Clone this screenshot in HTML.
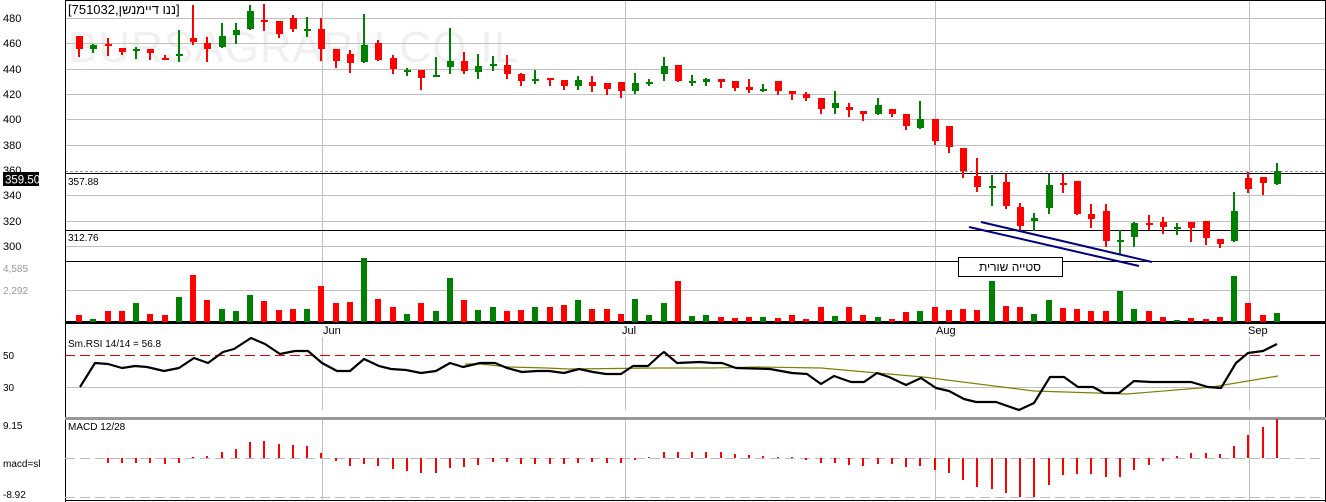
<!DOCTYPE html>
<html><head><meta charset="utf-8"><style>
html,body{margin:0;padding:0;background:#fff;width:1326px;height:502px;overflow:hidden}
svg{display:block}
text{font-family:"Liberation Sans",Arial,sans-serif}
</style></head><body>
<svg id="s" width="1326" height="502" xmlns="http://www.w3.org/2000/svg">
<rect width="1326" height="502" fill="#fff"/>
<text x="68" y="62" font-size="44" fill="#f0f0f0" letter-spacing="1">BURSAGRAPH.CO.IL</text>
<g stroke="#c0c0c0" stroke-width="1" shape-rendering="crispEdges">
<line x1="65" y1="18.5" x2="1325" y2="18.5"/><line x1="65" y1="43.5" x2="1325" y2="43.5"/>
<line x1="65" y1="69.5" x2="1325" y2="69.5"/><line x1="65" y1="94.5" x2="1325" y2="94.5"/>
<line x1="65" y1="119.5" x2="1325" y2="119.5"/><line x1="65" y1="145.5" x2="1325" y2="145.5"/>
<line x1="65" y1="195.5" x2="1325" y2="195.5"/><line x1="65" y1="221.5" x2="1325" y2="221.5"/>
<line x1="65" y1="246.5" x2="1325" y2="246.5"/><line x1="65" y1="290.5" x2="1325" y2="290.5"/>
<line x1="322.5" y1="0" x2="322.5" y2="322"/><line x1="625.5" y1="0" x2="625.5" y2="322"/>
<line x1="935.5" y1="0" x2="935.5" y2="322"/><line x1="1249.5" y1="0" x2="1249.5" y2="322"/>
<line x1="322.5" y1="337" x2="322.5" y2="410"/><line x1="625.5" y1="337" x2="625.5" y2="410"/>
<line x1="935.5" y1="337" x2="935.5" y2="410"/><line x1="1249.5" y1="337" x2="1249.5" y2="410"/>
<line x1="322.5" y1="420" x2="322.5" y2="500"/><line x1="625.5" y1="420" x2="625.5" y2="500"/>
<line x1="935.5" y1="420" x2="935.5" y2="500"/><line x1="1249.5" y1="420" x2="1249.5" y2="500"/>
<line x1="65" y1="387.5" x2="1325" y2="387.5"/>
</g>
<line x1="65" y1="171.5" x2="1325" y2="171.5" stroke="#999" stroke-dasharray="3,2" shape-rendering="crispEdges"/>
<g stroke="#000" shape-rendering="crispEdges">
<line x1="65" y1="173.5" x2="1325" y2="173.5"/><line x1="65" y1="230.5" x2="1325" y2="230.5"/>
<line x1="65" y1="261.5" x2="1325" y2="261.5"/>
<line x1="65" y1="0.5" x2="1325" y2="0.5"/>
<line x1="65.5" y1="0" x2="65.5" y2="502"/><line x1="1325.5" y1="0" x2="1325.5" y2="502"/>
<line x1="65" y1="500.5" x2="1326" y2="500.5"/>
</g>
<rect x="65" y="321" width="1261" height="3" fill="#000"/>
<rect x="65" y="417" width="1261" height="3" fill="#999"/>
<line x1="65" y1="355.5" x2="1325" y2="355.5" stroke="#e00000" stroke-dasharray="10,5" shape-rendering="crispEdges"/>
<g stroke="#bbb" stroke-dasharray="10,5" shape-rendering="crispEdges">
<line x1="65" y1="458.5" x2="1325" y2="458.5"/><line x1="65" y1="497.5" x2="1325" y2="497.5"/>
</g>
<g id="c" shape-rendering="crispEdges"></g>
<polyline fill="none" stroke="#808000" stroke-width="1.2" points="465,364 480,364 509,367 547,368 568,369 660,368 713,368 758,367 821,368 923,377 1034,391 1127,394 1212,387 1278,376"/>
<polyline fill="none" stroke="#000" stroke-width="2.2" stroke-linejoin="round" points="80,387 95,363 108,364 122,368 135,366 147,367 164,371 179,368 194,358 208,363 223,352 234,349 251,338 265,344 280,354 295,351 308,351 322,363 337,371 350,371 364,359 379,366 391,369 406,370 421,373 436,371 450,363 463,367 480,363 495,363 507,368 522,372 537,371 549,371 564,373 579,369 593,372 606,374 621,374 633,366 648,366 660,355 664,352 677,363 700,362 713,363 722,363 736,368 770,369 792,373 807,374 821,384 834,376 851,382 864,382 877,373 889,377 906,385 921,378 936,388 949,391 964,399 976,402 996,402 1019,410 1034,403 1050,377 1064,377 1078,387 1093,387 1104,393 1119,393 1134,381 1151,382 1191,382 1208,387 1221,388 1236,363 1248,353 1263,351 1277,344"/>
<g stroke="#000080" stroke-width="2">
<line x1="969" y1="227" x2="1139" y2="266"/><line x1="981" y1="222" x2="1152" y2="262"/>
</g>
<rect x="958.5" y="257.5" width="104" height="19" fill="#fff" stroke="#000" shape-rendering="crispEdges"/>
<text x="1010" y="271" font-size="12" text-anchor="middle" font-family="'Liberation Sans','Noto Sans CJK JP',sans-serif">סטייה שורית</text>
<text x="68" y="14" font-size="13" font-family="'Liberation Sans','Noto Sans CJK JP',sans-serif">[751032,ננו דיימנשן]</text>
<g font-size="11" fill="#000">
<text x="3" y="22">480</text><text x="3" y="47">460</text><text x="3" y="73">440</text>
<text x="3" y="98">420</text><text x="3" y="123">400</text><text x="3" y="149">380</text>
<text x="3" y="174">360</text><text x="3" y="199">340</text><text x="3" y="225">320</text><text x="3" y="250">300</text>
<text x="68" y="185" font-size="10">357.88</text><text x="68" y="241" font-size="10">312.76</text>
<text x="3" y="359" font-size="10">50</text><text x="3" y="391" font-size="10">30</text>
<text x="68" y="347" font-size="10">Sm.RSI 14/14 = 56.8</text>
<text x="68" y="430" font-size="10">MACD 12/28</text>
<text x="3" y="429" font-size="10">9.15</text><text x="3" y="467" font-size="10">macd=sl</text><text x="3" y="498" font-size="10">-8.92</text>
<text x="323" y="334" font-size="11">Jun</text><text x="622" y="334" font-size="11">Jul</text>
<text x="936" y="334" font-size="11">Aug</text><text x="1248" y="334" font-size="11">Sep</text>
</g>
<g font-size="10" fill="#999"><text x="3" y="272">4,585</text><text x="3" y="294">2,292</text></g>
<rect x="3" y="172" width="36" height="14" fill="#000"/>
<text x="5" y="183.5" font-size="11.5" fill="#fff">359.50</text>
</svg>
<script>
var C=[[36,49,36,56,'r'],[45,49,44,52,'g'],[44,45,38,55,'r'],[48,52,48,54,'r'],[49,49,47,58,'g'],[49,53,49,59,'r'],[58,58,55,59,'r'],[54,54,30,61,'g'],[38,42,5,44,'r'],[43,49,37,61,'r'],[36,47,23,47,'g'],[30,35,23,43,'g'],[11,29,5,29,'g'],[20,20,4,30,'r'],[21,34,21,37,'r'],[18,29,15,31,'r'],[29,29,17,36,'g'],[29,49,18,60,'r'],[49,61,49,67,'r'],[54,63,50,72,'r'],[45,62,14,62,'g'],[43,60,40,60,'r'],[58,69,55,73,'r'],[70,70,68,75,'g'],[70,78,70,89,'r'],[75,75,57,75,'g'],[61,67,28,73,'g'],[61,71,52,73,'r'],[66,72,54,78,'g'],[64,64,56,70,'g'],[65,74,55,78,'r'],[74,81,73,85,'r'],[79,81,70,83,'g'],[78,80,78,85,'r'],[80,86,80,89,'r'],[80,86,76,89,'g'],[82,86,76,91,'r'],[83,89,83,94,'r'],[82,91,82,97,'r'],[83,91,73,93,'g'],[82,82,79,85,'g'],[66,74,57,80,'g'],[65,81,65,81,'r'],[81,81,75,85,'g'],[79,82,78,85,'g'],[79,82,79,87,'r'],[81,88,81,90,'r'],[87,90,79,92,'r'],[89,91,84,91,'g'],[81,91,81,94,'r'],[91,94,91,99,'r'],[94,98,92,100,'r'],[98,109,98,113,'r'],[103,108,91,113,'g'],[107,110,103,116,'r'],[111,114,111,120,'r'],[105,114,98,114,'g'],[109,114,109,116,'r'],[114,126,114,129,'r'],[119,128,101,128,'g'],[119,141,119,144,'r'],[126,147,126,152,'r'],[148,171,148,177,'r'],[176,187,158,191,'r'],[186,186,175,205,'g'],[182,206,174,208,'r'],[207,226,203,230,'r'],[218,221,213,230,'g'],[185,208,174,213,'g'],[183,183,174,192,'r'],[181,214,181,214,'r'],[214,219,204,227,'r'],[211,241,204,246,'r'],[240,240,230,254,'g'],[223,237,222,246,'g'],[223,223,215,229,'r'],[222,227,217,233,'r'],[227,227,223,234,'g'],[222,228,222,241,'r'],[221,238,221,244,'r'],[239,244,239,247,'r'],[211,241,192,241,'g'],[178,189,172,192,'r'],[177,183,177,194,'r'],[171,184,163,184,'g']];
var V=[315,319,311,311,303,314,315,297,275,300,309,311,295,301,310,309,309,286,303,302,258,299,307,314,303,311,278,300,310,307,311,310,307,307,305,300,309,309,314,299,315,303,281,316,315,317,318,317,317,318,315,319,307,316,307,315,317,319,312,311,307,310,309,310,281,306,307,314,300,308,309,311,311,291,309,311,317,320,318,319,317,276,303,315,313];
var M=[458,458,463,463,463,463,464,463,457,456,452,449,442,441,444,445,446,453,461,466,464,466,469,471,473,473,468,467,465,462,462,464,464,464,464,463,462,463,463,460,457,452,452,452,452,452,454,455,456,457,457,460,463,463,465,466,464,464,467,466,470,473,480,487,489,493,497,497,485,475,474,474,477,477,470,465,461,456,453,453,454,446,435,427,419];
var g=document.getElementById('c'),ns='http://www.w3.org/2000/svg',h='';
function R(x,y,w,hh,f){return '<rect x="'+x+'" y="'+y+'" width="'+w+'" height="'+Math.max(hh,1)+'" fill="'+f+'"/>';}
for(var i=0;i<85;i++){var x=Math.round(79+14.26*i),c=C[i],f=c[4]=='r'?'#ff0000':'#008000';
h+=R(x-1,c[2],2,c[3]-c[2]+1,f);h+=R(x-3,c[0],7,Math.max(c[1]-c[0],2),f);
h+=R(x-3,V[i],6,322-V[i],f);
var m=M[i];if(m!=458){var t=Math.min(m,458),b=Math.max(m,458);h+=R(x-1,t,2,b-t,'#ff0000');}}
g.innerHTML=h;
</script>
</body></html>
